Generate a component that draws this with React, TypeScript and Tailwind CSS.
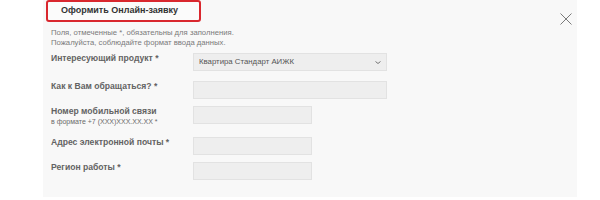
import React from "react";

function Row({ label, sub, width, children, mt }: { label: string; sub?: string; width: string; children?: React.ReactNode; mt: string }) {
  return (
    <div className={`flex ${mt}`}>
      <div className="w-[142px] shrink-0">
        <div className="text-[8.6px] font-bold leading-[10px] text-[#636363]">{label}</div>
        {sub && <div className="text-[7px] leading-[8px] mt-[2px] text-[#6a6a6a]">{sub}</div>}
      </div>
      <div className={`${width} h-[18px] bg-[#eeeeee] border border-[#e2e2e2] flex items-center`}>{children}</div>
    </div>
  );
}

export default function App() {
  return (
    <div className="w-[600px] h-[200px] bg-white overflow-hidden" style={{ fontFamily: '"Liberation Sans", Arial, sans-serif' }}>
      <div className="ml-[43px] w-[534px] h-[197px] mt-[3px] bg-[#f8f8f8] relative">
        <div className="-mt-[3px] ml-[3px] w-[155px] h-[22px] border-2 border-[#d9272e] rounded-[3px] bg-[#fbfbfb] flex items-center pl-[13px]">
          <span className="text-[9px] font-bold text-[#333]">Оформить Онлайн-заявку</span>
        </div>
        <svg className="absolute left-[517px] top-[13px]" width="12" height="12" viewBox="0 0 12 12">
          <path d="M0.5 0.5L11.5 11.5M11.5 0.5L0.5 11.5" stroke="#7a7a7a" strokeWidth="1" fill="none" />
        </svg>
        <div className="pl-[8px]">
          <div className="mt-[6px] text-[7.7px] leading-[9.5px] text-[#7a7a7a]">
            <div>Поля, отмеченные *, обязательны для заполнения.</div>
            <div>Пожалуйста, соблюдайте формат ввода данных.</div>
          </div>
          <Row mt="mt-[6px]" label="Интересующий продукт *" width="w-[194px]">
            <span className="ml-[5px] text-[7.8px] text-[#555] flex-1">Квартира Стандарт АИЖК</span>
            <svg className="mr-[5px]" width="6" height="3" viewBox="0 0 6 3">
              <path d="M0.5 0.5L3 2.5L5.5 0.5" stroke="#666" strokeWidth="0.9" fill="none" />
            </svg>
          </Row>
          <Row mt="mt-[10px]" label="Как к Вам обращаться? *" width="w-[194px]" />
          <Row mt="mt-[7px]" label="Номер мобильной связи" sub="в формате +7 (XXX)XXX.XX.XX *" width="w-[119px]" />
          <Row mt="mt-[11px]" label="Адрес электронной почты *" width="w-[119px]" />
          <Row mt="mt-[7px]" label="Регион работы *" width="w-[119px]" />
        </div>
      </div>
    </div>
  );
}
